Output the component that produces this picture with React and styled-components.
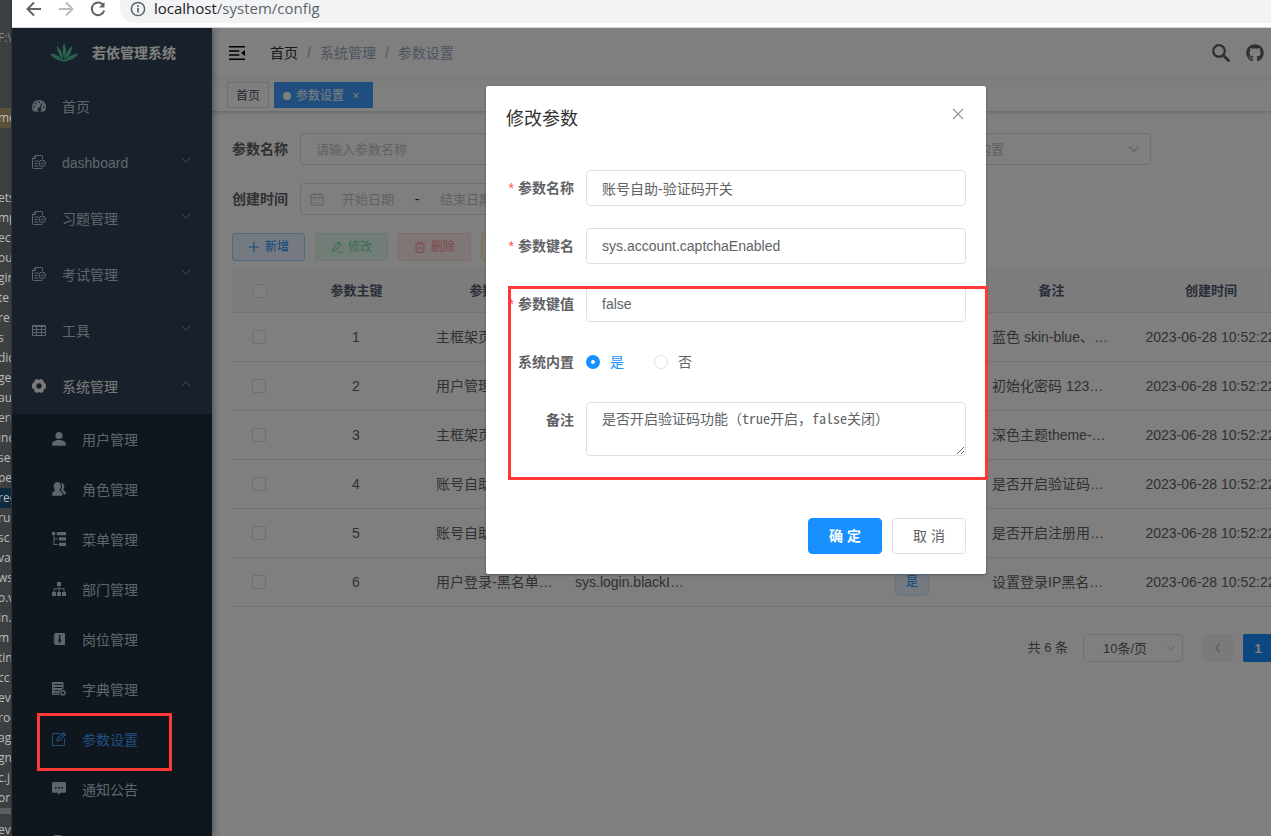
import React from "react";
import styled, { createGlobalStyle, css } from "styled-components";
import { FaGithub } from "react-icons/fa";

const editorLines = [
  { text: "", h: 28 },
  { text: "F:\\", dim: true },
  { text: "", h: 60 },
  { text: "mo", bg: "#5a5038" },
  { text: "", h: 60 },
  { text: "ets" },
  { text: "mp" },
  { text: "ect" },
  { text: "out" },
  { text: "gin" },
  { text: "te" },
  { text: "re" },
  { text: "s" },
  { text: "dic" },
  { text: "ge" },
  { text: "au" },
  { text: "ern" },
  { text: "ind" },
  { text: "se" },
  { text: "pe" },
  { text: "rec", bg: "#0d293e" },
  { text: "ruc" },
  { text: "sc" },
  { text: "va" },
  { text: "ws" },
  { text: "o.v" },
  { text: "in.j" },
  { text: "m" },
  { text: "tin" },
  { text: "cc" },
  { text: "eve" },
  { text: "roo" },
  { text: "ag" },
  { text: "gn" },
  { text: "c.j" },
  { text: "or" },
  { text: "", h: 6, bg: "#5b5e60" },
  { text: "", h: 6 },
  { text: "ev" },
];

const rows = [
  {
    id: 1,
    name: "主框架页-默认皮肤样式名称",
    key: "sys.index.skinName",
    value: "skin-blue",
    remark: "蓝色 skin-blue、绿色 skin-green",
  },
  {
    id: 2,
    name: "用户管理-账号初始密码",
    key: "sys.user.initPassword",
    value: "123456",
    remark: "初始化密码 123456",
  },
  {
    id: 3,
    name: "主框架页-侧边栏主题",
    key: "sys.index.sideTheme",
    value: "theme-dark",
    remark: "深色主题theme-dark，浅色主题theme-light",
  },
  {
    id: 4,
    name: "账号自助-验证码开关",
    key: "sys.account.captchaEnabled",
    value: "false",
    remark: "是否开启验证码功能（true开启，false关闭）",
  },
  {
    id: 5,
    name: "账号自助-是否开启用户注册功能",
    key: "sys.account.registerUser",
    value: "false",
    remark: "是否开启注册用户功能（true开启，false关闭）",
  },
  {
    id: 6,
    name: "用户登录-黑名单列表",
    key: "sys.login.blackIPList",
    value: "",
    remark: "设置登录IP黑名单限制，多个匹配项以;分隔",
  },
];

// icons
const Icon = ({ size = 14, children, ...rest }) => (
  <svg
    width={size}
    height={size}
    viewBox="0 0 14 14"
    fill="none"
    stroke="currentColor"
    aria-hidden="true"
    {...rest}
  >
    {children}
  </svg>
);

const GaugeIcon = () => (
  <Icon stroke="none">
    <path
      fill="currentColor"
      fillRule="evenodd"
      d="M7 1a7 7 0 0 0-7 7c0 1.600.5 3.100 1.400 4.300.2.200.4.300.6.300h10c.2 0 .5-.1.600-.3A7 7 0 0 0 7 1zM7 2.200a.9.9 0 1 1 0 1.800.9.900 0 0 1 0-1.800zM3.500 3.700a.9.900 0 1 1 0 1.800.9.900 0 0 1 0-1.800zM2.100 7.200a.9.900 0 1 1 0 1.800.9.900 0 0 1 0-1.800zM11.900 7.200a.9.900 0 1 1 0 1.800.9.900 0 0 1 0-1.800zM9.700 4l.9.400-1.900 4.500a1.900 1.900 0 1 1-1-.4z"
    />
  </Icon>
);

const FileCheckIcon = () => (
  <Icon strokeWidth="1">
    <path d="M10.500 4V1.500a1 1 0 0 0-1-1H3.500L.5 3.500v9a1 1 0 0 0 1 1h8a1 1 0 0 0 1-1" />
    <path d="M3.500.5v3H.5M2.500 6h4M2.500 8.500h3M2.500 11h4" />
    <circle cx="10.300" cy="8.300" r="3.200" />
    <path d="M8.800 8.200l1.200 1.200 2-2.200" />
  </Icon>
);

const TableIcon = () => (
  <Icon strokeWidth="1">
    <path d="M.5 2.500h13v10H.5zM.5 3.500h13M.5 6.500h13M.5 9.500h13M4.500 4v8M9.500 4v8" />
  </Icon>
);

const GearIcon = () => (
  <Icon stroke="none">
    <path
      fill="currentColor"
      fillRule="evenodd"
      d="M4.200.3h1.600a1.500 1.500 0 0 0 2.400 0h1.600l1.500.9.300 1.400c.1.800.6 1.500 1.600 1.600L14 5.600v2.800l-.8 1.400c-1 .1-1.500.8-1.600 1.600l-.3 1.400-1.500.9H8.200a1.500 1.500 0 0 0-2.400 0H4.200l-1.500-.9-.3-1.400C2.300 10.600 1.800 9.900.8 9.800L0 8.400V5.600l.8-1.400c1-.1 1.500-.8 1.600-1.600l.3-1.400zM7 4.300a2.700 2.700 0 1 0 0 5.400 2.700 2.700 0 0 0 0-5.400z"
    />
  </Icon>
);

const UserIcon = () => (
  <Icon stroke="none">
    <g fill="currentColor">
      <ellipse cx="7" cy="3.600" rx="3.600" ry="3.500" />
      <path d="M0 12.500C0 9.500 3 8 7 8s7 1.500 7 4.500c0 .8-.5 1.200-1.200 1.200H1.200C.5 13.700 0 13.300 0 12.500z" />
    </g>
  </Icon>
);

const PeoplesIcon = () => (
  <Icon stroke="none">
    <g fill="currentColor">
      <path d="M5.300 0C7.600 0 9 1.700 9 4c0 1.800-.7 3.200-1.700 4 .1 1 3.200 1.700 3.200 4.200 0 1-.3 1.500-1 1.500H1c-.7 0-1-.5-1-1.500 0-2.500 3.100-3.200 3.200-4.200C2.300 7.200 1.600 5.800 1.600 4c0-2.300 1.400-4 3.700-4z" />
      <path d="M9.200 1C11 1 12.300 2.500 12.300 4.500c0 1.300-.4 2.200-1.100 2.900.1.900 2.800 1.800 2.800 3.900 0 .9-.4 1.300-1 1.300h-1.500c0-2.300-1.500-3.400-2.800-4.300.9-1 1.400-2.500 1.400-4.200C10.100 2.900 9.800 1.900 9.200 1z" />
    </g>
  </Icon>
);

const TreeTableIcon = () => (
  <Icon stroke="none">
    <g fill="currentColor">
      <path d="M0 0h3.200v3.200H0zM4.700 0H14v3.200H4.700zM7 5.300h7v3.200H7zM7 10.800h7V14H7z" />
      <path d="M1.500 4.300h1v2.200h3.400v1H2.500v4.400h3.400v1H1.500z" />
    </g>
  </Icon>
);

const OrgIcon = () => (
  <Icon stroke="none">
    <g fill="currentColor">
      <path d="M5 0h4v4H5zM0 10h4v4H0zM5 10h4v4H5zM10 10h4v4h-4z" />
      <path d="M6.600 4h.9v2.300h5V10h-.9V7.200H7.500V10h-.9V7.200H2.500V10h-.9V6.300h5z" />
    </g>
  </Icon>
);

const PostIcon = () => (
  <Icon stroke="none">
    <path
      fill="currentColor"
      fillRule="evenodd"
      d="M3.300 1h8.900c.5 0 .8.300.8.800v10.400c0 .5-.3.800-.8.800H3.300c-.5 0-.8-.3-.8-.8V11h-1v-1h1V8.500h-1v-1h1v-1h-1v-1h1V4h-1V3h1V1.800c0-.5.300-.8.800-.8zM6.600 3l.6 1.600-.8 4.800L7.700 11 9 9.400l-.8-4.800L8.800 3z"
    />
  </Icon>
);

const DictIcon = () => (
  <Icon stroke="none">
    <path
      fill="currentColor"
      fillRule="evenodd"
      d="M1 0h9.500c.6 0 1 .4 1 1v5.600L8.500 8 7 10.500l.6 2.500H1c-.6 0-1-.4-1-1V1c0-.6.4-1 1-1zM1.200 2v1h1V2zM3 2v1h7.300V2zM1.200 5v1h1V5zM3 5v1h7.300V5zM1.200 8v1h1V8zM3 8v1h4V8zM1.200 11v.8h5V11z"
    />
    <circle cx="11" cy="10.800" r="2.100" stroke="currentColor" strokeWidth="1.400" />
  </Icon>
);

const EditIcon = () => (
  <Icon strokeWidth="1.100">
    <path d="M8 1.500H1.200a.7.700 0 0 0-.7.700v10.600c0 .4.300.7.700.7h10.600c.4 0 .7-.3.700-.7V6.500" />
    <path d="M5 9l.6-2.600L11.500.6l1.900 1.900-5.800 5.800zM10.300 1.800l1.900 1.900" />
  </Icon>
);

const MessageIcon = () => (
  <Icon stroke="none">
    <path
      fill="currentColor"
      fillRule="evenodd"
      d="M1.500 0h11c.9 0 1.500.7 1.500 1.500v7.800c0 .9-.6 1.500-1.500 1.500H8.300L6 13.500v-2.700H1.500C.6 10.800 0 10.200 0 9.300V1.500C0 .7.600 0 1.500 0zM3 4.900v1.500h1.600V4.900zM6.200 4.900v1.500h1.600V4.900zM9.400 4.900v1.500H11V4.900z"
    />
  </Icon>
);

const LogIcon = () => (
  <Icon stroke="none">
    <path fill="currentColor" d="M2 0h7l4 4v10H2z" />
  </Icon>
);

const Chevron = ({ size = 12, up }) => (
  <Icon size={size} strokeWidth="1.100">
    <path d={up ? "M2 9.500L7 4.500l5 5" : "M2 4.500l5 5 5-5"} />
  </Icon>
);

const CalendarIcon = () => (
  <Icon strokeWidth="1">
    <path d="M1 2.500h12v10.500H1zM1 5.500h12M4 .5v3M10 .5v3" />
    <path d="M3.500 8h7M3.500 10.500h7" strokeDasharray="1.500 1.200" />
  </Icon>
);

const PlusIcon = () => (
  <Icon size={12} strokeWidth="1.200">
    <path d="M7 1v12M1 7h12" />
  </Icon>
);

const PenIcon = () => (
  <Icon size={12} strokeWidth="1.200">
    <path d="M2 12l.6-3.500L8.800 1.500l2.600 2.300-6 7zM2 12l3.400-1.200M7.500 13H13" />
  </Icon>
);

const TrashIcon = () => (
  <Icon size={12} strokeWidth="1.200">
    <path d="M1 3.500h12M4.500 3.500v-2h5v2M2.500 3.500V13h9V3.500M5.500 6v4.500M8.500 6v4.500" />
  </Icon>
);

const DownloadIcon = () => (
  <Icon size={12} strokeWidth="1.200">
    <path d="M7 1v8.500M3.500 6.500L7 9.800l3.500-3.300M1.500 13h11" />
  </Icon>
);

const LeafLogo = () => (
  <svg width="32" height="32" viewBox="0 0 32 32" fill="#52c9a2" aria-hidden="true">
    <path d="M16 6c2.800 5 2.600 10.500.4 16.500C14.600 16.500 14 11 16 6z" />
    <path d="M9 9c3.800 3 5.800 7.500 6.300 13.500C11.500 19 9 14.500 9 9z" />
    <path d="M24 9c0 5.500-2.500 10-6.700 13.500C17.700 16.500 20 12 24 9z" />
    <path d="M2 16.500c5.500.2 10 2.500 12.700 7.200C9.500 23.500 5 21 2 16.500z" />
    <path d="M30.500 16.500c-3 4.500-7.500 7-12.700 7.200 2.700-4.700 7.200-7 12.700-7.200z" />
    <path d="M11.500 23.300l5-.8 4.500.8-4.700 1.400z" />
  </svg>
);

const FoldIcon = () => (
  <svg width="16" height="14" viewBox="0 0 16 14" fill="#000" aria-hidden="true">
    <path d="M0 0h16v1.500H0zM0 4.200h10.300v1.500H0zM0 8.300h10.300v1.500H0zM0 12.500h16V14H0zM16 4v6l-4-3z" />
  </svg>
);

const SearchIcon = () => (
  <svg width="18" height="18" viewBox="0 0 18 18" fill="none" stroke="currentColor" aria-hidden="true">
    <circle cx="7" cy="7" r="5.800" strokeWidth="2.200" />
    <path d="M11.300 11.300l5.200 5.200" strokeWidth="2.800" strokeLinecap="round" />
  </svg>
);

const menu = [
  { label: "首页", icon: <GaugeIcon /> },
  { label: "dashboard", icon: <FileCheckIcon />, arrow: true },
  { label: "习题管理", icon: <FileCheckIcon />, arrow: true },
  { label: "考试管理", icon: <FileCheckIcon />, arrow: true },
  { label: "工具", icon: <TableIcon />, arrow: true },
  { label: "系统管理", icon: <GearIcon />, arrow: true, open: true },
];

const subMenu = [
  { label: "用户管理", icon: <UserIcon /> },
  { label: "角色管理", icon: <PeoplesIcon /> },
  { label: "菜单管理", icon: <TreeTableIcon /> },
  { label: "部门管理", icon: <OrgIcon /> },
  { label: "岗位管理", icon: <PostIcon /> },
  { label: "字典管理", icon: <DictIcon /> },
  { label: "参数设置", icon: <EditIcon />, active: true },
  { label: "通知公告", icon: <MessageIcon /> },
  { label: "日志管理", icon: <LogIcon />, tall: true },
];

const Sidebar = () => (
  <Side>
    <Brand>
      <LeafLogo />
      <BrandName>若依管理系统</BrandName>
    </Brand>
    {menu.map((item) => (
      <MenuItem key={item.label} href="#" $open={item.open}>
        {item.icon}
        <MenuText>{item.label}</MenuText>
        {item.arrow && (
          <Arrow>
            <Chevron up={item.open} />
          </Arrow>
        )}
      </MenuItem>
    ))}
    <SubMenu>
      {subMenu.map((item) => (
        <SubItem key={item.label} href="#" $active={item.active} $tall={item.tall}>
          {item.icon}
          <MenuText>{item.label}</MenuText>
        </SubItem>
      ))}
    </SubMenu>
  </Side>
);

const SearchForm = () => (
  <form>
    <FormRow>
      <FormItem>
        <Label htmlFor="q-name">参数名称</Label>
        <SearchInput id="q-name" placeholder="请输入参数名称" />
      </FormItem>
      <FormItem>
        <Label htmlFor="q-key">参数键名</Label>
        <SearchInput id="q-key" placeholder="请输入参数键名" />
      </FormItem>
      <FormItem>
        <Label htmlFor="q-type">系统内置</Label>
        <SelectBox $width={215}>
          <TypeSelect id="q-type" defaultValue="">
            <option value="">系统内置</option>
          </TypeSelect>
          <SelectArrow $right={10}>
            <Chevron size={14} />
          </SelectArrow>
        </SelectBox>
      </FormItem>
    </FormRow>
    <FormRow>
      <FormItem>
        <Label htmlFor="q-begin">创建时间</Label>
        <DateRange>
          <CalendarIcon />
          <DateInput id="q-begin" placeholder="开始日期" />
          <DateDash>-</DateDash>
          <DateInput aria-label="结束日期" placeholder="结束日期" />
        </DateRange>
      </FormItem>
    </FormRow>
  </form>
);

const ConfigTable = () => (
  <Table>
    <colgroup>
      <CheckCol />
      <col />
      <col />
      <col />
      <col />
      <col />
      <col />
      <TimeCol />
      <col />
    </colgroup>
    <thead>
      <tr>
        <Th>
          <Check type="checkbox" aria-label="全选" />
        </Th>
        <Th>参数主键</Th>
        <Th>参数名称</Th>
        <Th>参数键名</Th>
        <Th>参数键值</Th>
        <Th>系统内置</Th>
        <Th>备注</Th>
        <Th>创建时间</Th>
        <Th />
      </tr>
    </thead>
    <tbody>
      {rows.map((row) => (
        <tr key={row.id}>
          <Td>
            <Check type="checkbox" aria-label={`选择 ${row.id}`} />
          </Td>
          <Td>{row.id}</Td>
          <Td>{row.name}</Td>
          <Td>{row.key}</Td>
          <Td>{row.value}</Td>
          <Td>
            <Tag>是</Tag>
          </Td>
          <Td>{row.remark}</Td>
          <Td>2023-06-28 10:52:22</Td>
          <Td />
        </tr>
      ))}
    </tbody>
  </Table>
);

const EditDialog = () => (
  <Dialog role="dialog" aria-labelledby="dialog-title">
    <DialogHeader>
      <DialogTitle id="dialog-title">修改参数</DialogTitle>
      <CloseButton type="button" aria-label="关闭">
        <Icon strokeWidth="1.100">
          <path d="M2 2l10 10M12 2L2 12" />
        </Icon>
      </CloseButton>
    </DialogHeader>
    <DialogBody>
      <DialogItem>
        <DialogLabel htmlFor="f-name" $required>
          参数名称
        </DialogLabel>
        <TextInput id="f-name" defaultValue="账号自助-验证码开关" />
      </DialogItem>
      <DialogItem>
        <DialogLabel htmlFor="f-key" $required>
          参数键名
        </DialogLabel>
        <TextInput id="f-key" defaultValue="sys.account.captchaEnabled" />
      </DialogItem>
      <DialogItem>
        <DialogLabel htmlFor="f-value" $required>
          参数键值
        </DialogLabel>
        <TextInput id="f-value" defaultValue="false" />
      </DialogItem>
      <DialogItem>
        <DialogLabel as="span">系统内置</DialogLabel>
        <RadioGroup>
          <RadioLabel $checked>
            <Radio type="radio" name="type" defaultChecked />是
          </RadioLabel>
          <RadioLabel>
            <Radio type="radio" name="type" />否
          </RadioLabel>
        </RadioGroup>
      </DialogItem>
      <DialogItem>
        <DialogLabel htmlFor="f-remark">备注</DialogLabel>
        <TextArea
          id="f-remark"
          defaultValue="是否开启验证码功能（true开启，false关闭）"
        />
      </DialogItem>
    </DialogBody>
    <DialogFooter>
      <DialogButton type="button" $primary>
        确 定
      </DialogButton>
      <DialogButton type="button">取 消</DialogButton>
    </DialogFooter>
  </Dialog>
);

const App = () => (
  <Desktop>
    <GlobalStyle />
    <EditorStrip>
      {editorLines.map((line, i) => (
        <EditorLine key={i} $h={line.h} $bg={line.bg} $dim={line.dim}>
          {line.text}
        </EditorLine>
      ))}
    </EditorStrip>
    <Browser>
      <AddressBar>
        <NavIcon viewBox="0 0 16 16">
          <path d="M15 8H2M8 1.500L1.500 8 8 14.500" />
        </NavIcon>
        <NavIcon viewBox="0 0 16 16" $disabled>
          <path d="M1 8h13M8 1.500L14.500 8 8 14.500" />
        </NavIcon>
        <NavIcon viewBox="0 0 16 16">
          <path d="M13.500 4.500A6.300 6.300 0 1 0 14.200 9.500" />
          <path d="M14.500 1v5.500H9z" fill="#5f6368" stroke="none" />
        </NavIcon>
        <UrlBox>
          <NavIcon viewBox="0 0 16 16">
            <circle cx="8" cy="8" r="6.600" strokeWidth="1.500" />
            <path d="M8 7v4.500M8 4.200v1.700" strokeWidth="1.700" />
          </NavIcon>
          <span>
            localhost<UrlPath>/system/config</UrlPath>
          </span>
        </UrlBox>
      </AddressBar>
      <Page>
        <Sidebar />
        <Main>
          <Navbar>
            <FoldIcon />
            <Crumbs>
              <Crumb href="#" $first>
                首页
              </Crumb>
              <Slash>/</Slash>
              <Crumb as="span">系统管理</Crumb>
              <Slash>/</Slash>
              <Crumb as="span">参数设置</Crumb>
            </Crumbs>
            <NavRight>
              <SearchIcon />
              <FaGithub size={18} />
            </NavRight>
          </Navbar>
          <TagsView>
            <PageTag href="#">首页</PageTag>
            <PageTag href="#" $active>
              <Dot />
              参数设置
              <TagClose>×</TagClose>
            </PageTag>
          </TagsView>
          <Content>
            <SearchForm />
            <Toolbar>
              <ToolButton type="button" $kind="primary">
                <PlusIcon />
                新增
              </ToolButton>
              <ToolButton type="button" $kind="success" disabled>
                <PenIcon />
                修改
              </ToolButton>
              <ToolButton type="button" $kind="danger" disabled>
                <TrashIcon />
                删除
              </ToolButton>
              <ToolButton type="button" $kind="warning">
                <DownloadIcon />
                导出
              </ToolButton>
            </Toolbar>
            <ConfigTable />
            <Pagination>
              <Total>共 6 条</Total>
              <SelectBox $width={100}>
                <SizeSelect aria-label="每页条数" defaultValue="10">
                  <option value="10">10条/页</option>
                </SizeSelect>
                <SelectArrow $right={6}>
                  <Chevron />
                </SelectArrow>
              </SelectBox>
              <Pager>
                <PageButton type="button" aria-label="上一页">
                  <Icon size={12} strokeWidth="2">
                    <path d="M9.500 2l-5 5 5 5" />
                  </Icon>
                </PageButton>
                <PageButton type="button" $active>
                  1
                </PageButton>
              </Pager>
            </Pagination>
          </Content>
        </Main>
        <Mask>
          <EditDialog />
        </Mask>
      </Page>
    </Browser>
    <SidebarMark />
    <FormMark />
  </Desktop>
);

const GlobalStyle = createGlobalStyle`
  * {
    box-sizing: border-box;
  }
  body {
    margin: 0;
    overflow: hidden;
    font-family: "Liberation Sans", "Noto Sans CJK SC", sans-serif;
    font-size: 14px;
    line-height: 20px;
    color: #303133;
  }
  button, input, select {
    font-family: inherit;
    margin: 0;
  }
  a {
    text-decoration: none;
    color: inherit;
  }
`;

const Desktop = styled.div`
  position: relative;
  display: flex;
  height: 100vh;
  overflow: hidden;
`;

const EditorStrip = styled.div`
  flex: 0 0 12px;
  overflow: hidden;
  background: #3c3f41;
  border-right: 1px solid #313335;
`;

const EditorLine = styled.div`
  height: ${(p) => p.$h || 20}px;
  line-height: 20px;
  font-family: "Open Sans", "Noto Sans", sans-serif;
  font-size: 12px;
  text-indent: -2px;
  white-space: nowrap;
  color: ${(p) => (p.$dim ? "#85888a" : "#bbbbbb")};
  background: ${(p) => p.$bg || "transparent"};
`;

// the window is wider than the visible desktop and runs off its right edge
const Browser = styled.div`
  flex: 1 0 1448px;
  min-width: 0;
  display: flex;
  flex-direction: column;
`;

const AddressBar = styled.div`
  display: flex;
  align-items: flex-start;
  gap: 16px;
  height: 28px;
  padding-left: 14px;
  background: #fff;
  border-bottom: 1px solid #d5d7da;
`;

const NavIcon = styled.svg`
  width: 16px;
  height: 16px;
  margin-top: 1px;
  fill: none;
  stroke: ${(p) => (p.$disabled ? "#babcbe" : "#5f6368")};
  stroke-width: 2;
`;

const UrlBox = styled.div`
  flex: 1;
  display: flex;
  gap: 8px;
  height: 23px;
  margin-left: -2px;
  padding-left: 10px;
  border-radius: 0 0 0 14px;
  background: #f1f3f4;
  font-family: "Open Sans", "Noto Sans", sans-serif;
  font-size: 15px;
  line-height: 16px;
  color: #202124;
`;

const UrlPath = styled.span`
  color: #5f6368;
`;

const Page = styled.div`
  position: relative;
  flex: 1;
  display: flex;
  min-height: 0;
  overflow: hidden;
  background: #fff;
`;

const Side = styled.nav`
  position: relative;
  z-index: 1;
  flex: 0 0 200px;
  background: #304156;
  box-shadow: 2px 0 6px rgba(0, 21, 41, 0.35);
`;

const Brand = styled.div`
  display: flex;
  align-items: center;
  justify-content: center;
  gap: 12px;
  height: 50px;
`;

const BrandName = styled.h1`
  margin: 0;
  font-size: 14px;
  font-weight: 700;
  color: #fff;
`;

const menuRow = css`
  display: flex;
  align-items: center;
  gap: 16px;
`;

const MenuItem = styled.a`
  ${menuRow}
  height: 56px;
  padding: 0 20px;
  color: ${(p) => (p.$open ? "#f4f4f5" : "#bfcbd9")};
`;

const MenuText = styled.span`
  padding-top: 2px;
`;

const Arrow = styled.span`
  display: flex;
  height: 16px;
  margin-left: auto;
  color: #909399;
`;

const SubMenu = styled.div`
  background: #1f2d3d;
`;

const SubItem = styled.a`
  ${menuRow}
  height: ${(p) => (p.$tall ? 56 : 50)}px;
  padding-left: 40px;
  color: ${(p) => (p.$active ? "#409eff" : "#bfcbd9")};
`;

const Main = styled.main`
  flex: 1;
  min-width: 0;
`;

const Navbar = styled.header`
  display: flex;
  align-items: center;
  height: 50px;
  padding: 0 196px 0 17px;
  box-shadow: 0 1px 4px rgba(0, 21, 41, 0.08);
`;

const Crumbs = styled.div`
  display: flex;
  margin-left: 25px;
`;

const Crumb = styled.a`
  color: ${(p) => (p.$first ? "#303133" : "#97a8be")};
`;

const Slash = styled.span`
  margin: 0 9px;
  font-weight: 700;
  color: #c0c4cc;
`;

const NavRight = styled.div`
  display: flex;
  gap: 16px;
  margin-left: auto;
  color: #5a5e66;
`;

const TagsView = styled.div`
  display: flex;
  align-items: center;
  gap: 5px;
  height: 34px;
  padding-left: 15px;
  border-bottom: 1px solid #d8dce5;
  box-shadow: 0 1px 3px 0 rgba(0, 0, 0, 0.12), 0 0 3px 0 rgba(0, 0, 0, 0.04);
`;

const PageTag = styled.a`
  display: flex;
  align-items: center;
  height: 26px;
  padding: 2px 8px 0;
  border: 1px solid ${(p) => (p.$active ? "#409eff" : "#d8dce5")};
  background: ${(p) => (p.$active ? "#409eff" : "#fff")};
  color: ${(p) => (p.$active ? "#fff" : "#495060")};
  font-size: 12px;
`;

const Dot = styled.span`
  width: 8px;
  height: 8px;
  margin-right: 5px;
  border-radius: 50%;
  background: #fff;
`;

const TagClose = styled.span`
  width: 16px;
  margin-left: 4px;
  text-align: center;
`;

const Content = styled.section`
  padding: 21px 20px;
`;

const FormRow = styled.div`
  display: flex;
  gap: 10px;
  margin-bottom: 18px;
`;

const FormItem = styled.div`
  display: flex;
  align-items: center;
  height: 32px;
`;

const Label = styled.label`
  width: 68px;
  font-weight: 700;
  color: #606266;
`;

const fieldBorder = css`
  border: 1px solid #dcdfe6;
  border-radius: 4px;
  background: #fff;
  color: #606266;
  outline: none;
`;

const SearchInput = styled.input`
  ${fieldBorder}
  width: 240px;
  height: 32px;
  padding: 0 15px;
  font-size: 13px;
  &::placeholder {
    color: #c0c4cc;
  }
`;

const SelectBox = styled.div`
  position: relative;
  width: ${(p) => p.$width}px;
`;

const SelectArrow = styled.span`
  position: absolute;
  top: 0;
  bottom: 0;
  right: ${(p) => p.$right}px;
  display: flex;
  align-items: center;
  color: #c0c4cc;
  pointer-events: none;
`;

const TypeSelect = styled.select`
  ${fieldBorder}
  appearance: none;
  width: 100%;
  height: 32px;
  padding: 0 15px;
  font-size: 13px;
  color: #c0c4cc;
`;

const SizeSelect = styled.select`
  ${fieldBorder}
  appearance: none;
  display: block;
  width: 100%;
  height: 28px;
  padding: 0 19px;
  font-size: 13px;
`;

const DateRange = styled.div`
  ${fieldBorder}
  display: flex;
  align-items: center;
  width: 240px;
  height: 32px;
  padding: 0 9px;
  color: #303133;
  svg {
    flex: none;
    color: #c0c4cc;
  }
`;

const DateInput = styled.input`
  width: 88px;
  border: 0;
  padding: 0;
  background: none;
  text-align: center;
  font-size: 13px;
  outline: none;
  &::placeholder {
    color: #c0c4cc;
  }
`;

const DateDash = styled.span`
  width: 10px;
  text-align: center;
`;

const Toolbar = styled.div`
  display: flex;
  gap: 10px;
  margin-bottom: 8px;
`;

const kinds = {
  primary: { text: "#1890ff", bg: "#e8f4ff", line: "#a3d3ff" },
  success: { text: "#71e2a3", bg: "#e7faf0", line: "#d0f5e0" },
  danger: { text: "#ff9292", bg: "#ffeded", line: "#ffdbdb" },
  warning: { text: "#ffba00", bg: "#fff8e6", line: "#ffe399" },
};

const ToolButton = styled.button`
  display: flex;
  align-items: center;
  justify-content: center;
  gap: 5px;
  width: 73px;
  height: 28px;
  padding: 0;
  border: 1px solid ${(p) => kinds[p.$kind].line};
  border-radius: 3px;
  background: ${(p) => kinds[p.$kind].bg};
  color: ${(p) => kinds[p.$kind].text};
  font-size: 12px;
  line-height: 20px;
`;

const Table = styled.table`
  width: 100%;
  table-layout: fixed;
  border-collapse: separate;
  border-spacing: 0;
`;

const CheckCol = styled.col`
  width: 55px;
`;

const TimeCol = styled.col`
  width: 180px;
`;

const Th = styled.th`
  height: 44px;
  padding: 0 10px;
  border-bottom: 1px solid #dfe6ec;
  background: #f8f8f9;
  color: #515a6e;
  font-size: 13px;
`;

const Td = styled.td`
  height: 49px;
  padding: 0 11px 0 10px;
  border-bottom: 1px solid #dfe6ec;
  color: #606266;
  text-align: center;
  white-space: nowrap;
  overflow: hidden;
  text-overflow: ellipsis;
`;

const Check = styled.input`
  appearance: none;
  display: block;
  width: 14px;
  height: 14px;
  margin: 0 auto;
  border: 1px solid #dcdfe6;
  border-radius: 2px;
  background: #fff;
`;

const Tag = styled.span`
  display: inline-block;
  height: 28px;
  padding: 0 10px;
  border: 1px solid #d1e9ff;
  border-radius: 4px;
  background: #e8f4ff;
  color: #1890ff;
  font-size: 12px;
  line-height: 26px;
  vertical-align: middle;
`;

const Pagination = styled.div`
  display: flex;
  align-items: center;
  justify-content: flex-end;
  margin-top: 27px;
  padding-right: 167px;
`;

const Total = styled.span`
  margin-right: 15px;
  font-size: 13px;
  color: #606266;
`;

const Pager = styled.div`
  display: flex;
  gap: 10px;
  margin-left: 20px;
`;

const PageButton = styled.button`
  display: flex;
  align-items: center;
  justify-content: center;
  width: 30px;
  height: 28px;
  padding: 0;
  border: 0;
  border-radius: 2px;
  background: ${(p) => (p.$active ? "#1890ff" : "#f4f4f5")};
  color: ${(p) => (p.$active ? "#fff" : "#c0c4cc")};
  font-size: 13px;
  font-weight: 700;
`;

const Mask = styled.div`
  position: absolute;
  inset: 0;
  z-index: 2;
  padding-top: 58px;
  background: rgba(0, 0, 0, 0.5);
`;

const Dialog = styled.div`
  width: 500px;
  margin: 0 auto;
  border-radius: 2px;
  background: #fff;
  box-shadow: 0 1px 3px rgba(0, 0, 0, 0.3);
`;

const DialogHeader = styled.div`
  display: flex;
  justify-content: space-between;
  padding: 20px 20px 8px;
`;

const DialogTitle = styled.h2`
  margin: 0;
  font-size: 18px;
  line-height: 26px;
  font-weight: 400;
`;

const CloseButton = styled.button`
  display: flex;
  height: 16px;
  padding: 1px;
  border: 0;
  background: none;
  color: #909399;
`;

const DialogBody = styled.form`
  display: flex;
  flex-direction: column;
  gap: 22px;
  padding: 30px 20px 52px;
`;

const DialogItem = styled.div`
  display: flex;
`;

const DialogLabel = styled.label`
  flex: 0 0 80px;
  padding-right: 12px;
  text-align: right;
  line-height: 36px;
  font-weight: 700;
  color: #606266;
  ${(p) =>
    p.$required &&
    css`
      &::before {
        content: "*";
        margin-right: 4px;
        font-weight: 400;
        color: #ff4949;
      }
    `}
`;

const TextInput = styled.input`
  ${fieldBorder}
  flex: 1;
  min-width: 0;
  height: 36px;
  padding: 0 15px;
  font-size: 14px;
`;

const TextArea = styled.textarea`
  ${fieldBorder}
  flex: 1;
  min-width: 0;
  height: 54px;
  margin: 0;
  padding: 5px 15px;
  font-family: "Noto Sans Mono CJK SC", "Noto Sans CJK SC", monospace;
  font-size: 14px;
  line-height: 20px;
  resize: vertical;
`;

const RadioGroup = styled.div`
  display: flex;
  align-items: center;
  gap: 30px;
  height: 36px;
`;

const RadioLabel = styled.label`
  display: flex;
  align-items: center;
  gap: 10px;
  color: ${(p) => (p.$checked ? "#1890ff" : "#606266")};
`;

const Radio = styled.input`
  appearance: none;
  width: 14px;
  height: 14px;
  border: 1px solid #dcdfe6;
  border-radius: 50%;
  background: #fff;
  &:checked {
    border: 5px solid #1890ff;
  }
`;

const DialogFooter = styled.div`
  display: flex;
  justify-content: flex-end;
  gap: 10px;
  padding: 10px 20px 20px;
`;

const DialogButton = styled.button`
  width: 74px;
  height: 36px;
  padding: 0;
  border: 1px solid ${(p) => (p.$primary ? "#1890ff" : "#dcdfe6")};
  border-radius: 4px;
  background: ${(p) => (p.$primary ? "#1890ff" : "#fff")};
  color: ${(p) => (p.$primary ? "#fff" : "#606266")};
  font-size: 14px;
  line-height: 20px;
  font-weight: ${(p) => (p.$primary ? 700 : 400)};
`;

const Mark = styled.div`
  position: absolute;
  z-index: 3;
  border: 3px solid #ff3838;
  pointer-events: none;
`;

const SidebarMark = styled(Mark)`
  top: 713px;
  left: 37px;
  width: 135px;
  height: 58px;
`;

const FormMark = styled(Mark)`
  top: 286px;
  left: 508px;
  width: 480px;
  height: 194px;
`;

export default App;
